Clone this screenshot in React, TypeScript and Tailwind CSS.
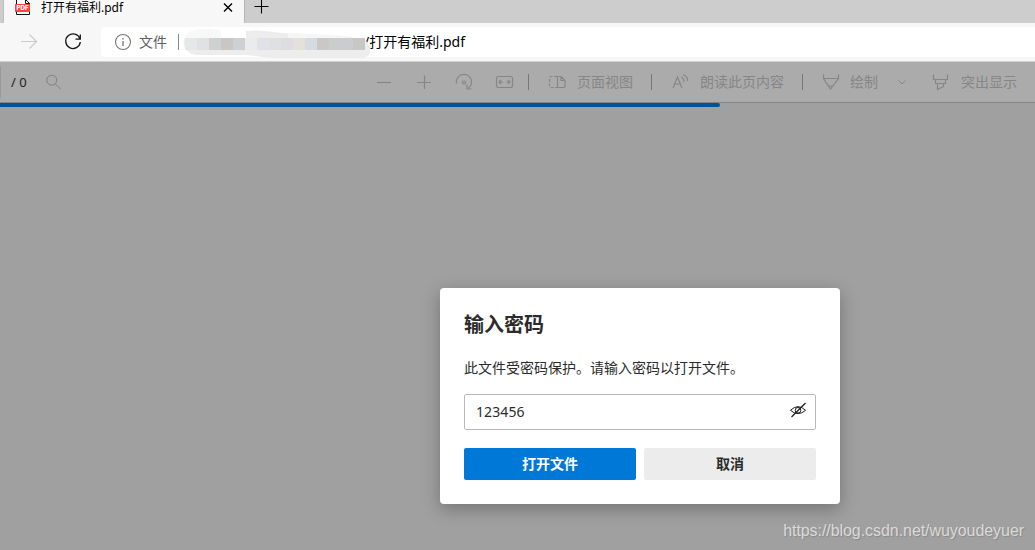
import type { ReactNode } from "react";

const mosaic = [
  "bg-[#e6e7e8]",
  "bg-[#e0e1e5]",
  "bg-[#cdd2d1]",
  "bg-[#cbc5c4]",
  "bg-[#cfd0d4]",
  "bg-[#eaebed]",
  "bg-[#dfe3e8]",
  "bg-[#e0e0e1]",
  "bg-[#dcdde1]",
  "bg-[#e4e1db]",
  "bg-[#d6dbe1]",
  "bg-[#c9c8c7]",
  "bg-[#c9cdcb]",
  "bg-[#cbcccf]",
  "bg-[#c8c7c4]",
];

type IconProps = { className?: string; children: ReactNode };

const Icon = ({ className = "", children }: IconProps) => (
  <svg
    className={`h-4 w-4 shrink-0 overflow-visible ${className}`}
    viewBox="0 0 16 16"
    fill="none"
    stroke="currentColor"
    strokeWidth="1"
  >
    {children}
  </svg>
);

const TabStrip = () => (
  <div className="flex h-[23px] bg-[#cdcdcd]">
    <div className="w-1 shrink-0 rounded-br-sm border-r border-[#bdbdbd]" />
    <div className="flex w-60 shrink-0 items-start bg-[#f7f7f7] pl-[11px]">
      <svg className="h-4 w-4 shrink-0" viewBox="0 0 16 16" fill="none">
        <path d="M1.5 0V14.5H14.5V3.5L11 0" fill="#fff" stroke="#111" />
        <path d="M10.5 0V3.5H14.5" stroke="#111" />
        <rect x="0" y="4" width="15" height="8" rx="0.5" fill="#fa4545" />
        <text x="1.5" y="10.3" fill="#fff" fontSize="6.2" fontWeight="800" fontFamily="Inter, sans-serif" textLength="12.2">
          PDF
        </text>
      </svg>
      <span className="ml-2.5 text-xs leading-[15px] text-black">打开有福利.pdf</span>
      <Icon className="mt-0 ml-auto mr-2 text-black">
        <path d="M4 3.5L12 11.5M12 3.5L4 11.5" strokeWidth="1.4" />
      </Icon>
    </div>
    <div className="w-px shrink-0 rounded-bl bg-[#b5b5b5]" />
    <Icon className="ml-2 text-black">
      <path d="M1.5 6.5H15.5M8.5 0V13.5" strokeWidth="1.1" />
    </Icon>
  </div>
);

const AddressRow = () => (
  <div className="flex h-[39px] border-b border-[#cfcfcf] bg-[#f7f7f7] pt-1">
    <Icon className="mt-[7px] ml-[21px] text-[#cbcbcb]">
      <path d="M0 7.5H15.5M8.5 0.5L15.5 7.5L8.5 14.5" strokeWidth="1.2" />
    </Icon>
    <Icon className="mt-[7px] ml-7 text-[#161616]">
      <path d="M15 5A7.3 7.3 0 1 0 15.3 8M15.3 0.5V5.2H10.5" strokeWidth="1.3" />
    </Icon>
    <div className="ml-5 flex h-[30px] flex-1 items-center rounded-l bg-white pl-3.5">
      <Icon className="text-[#767676]">
        <circle cx="8" cy="8" r="7.5" strokeWidth="1.1" />
        <path d="M8 7V12M8 4V5.5" strokeWidth="1.3" />
      </Icon>
      <span className="ml-2 w-7 text-sm text-[#606060]">文件</span>
      <div className="ml-[11px] h-4 w-px bg-[#8a8a8a]" />
      <div className="relative z-10 ml-1 h-[30px] w-[188px] shrink-0">
        <svg className="absolute inset-0" width="190" height="32" viewBox="0 0 190 32">
          <path
            d="M10 4C20 1 28 2 38 4V11H63V4C80 2 90 6 105 6L160 9L182 13C190 20 189 31 178 31H92C80 31 72 28 60 28H14C-2 27 -4 8 10 4Z"
            fill="#ededee"
          />
          <path d="M10 4C20 1 28 2 38 4V11H2C3 8 5 5 10 4Z" fill="#f7f8f8" />
          <path d="M105 6L160 9L166 11H105Z" fill="#f6f6f6" />
        </svg>
        <div className="absolute top-[11px] left-0.5 flex h-3">
          {mosaic.map((color) => (
            <div key={color} className={`w-3 ${color}`} />
          ))}
        </div>
      </div>
      <span className="-ml-[7px] text-sm text-black">/打开有福利.pdf</span>
    </div>
  </div>
);

const Divider = ({ className }: { className: string }) => (
  <div className={`h-4 w-px shrink-0 bg-[#777] ${className}`} />
);

const PdfToolbar = () => (
  <div className="flex h-[41px] items-center border-b border-[#868686] bg-[#ababab] text-sm whitespace-nowrap text-[#868686]">
    <div className="h-8 w-px shrink-0 bg-[#999]" />
    <span className="ml-2.5 w-[34px] shrink-0 text-[13px] text-[#222]">/ 0</span>
    <Icon className="ml-px text-[#808080]">
      <circle cx="5.7" cy="6.2" r="5" />
      <path d="M9.3 9.8L14.5 15" />
    </Icon>
    <Icon className="ml-[314px]">
      <path d="M1 8.5H15" strokeWidth="1.2" />
    </Icon>
    <Icon className="ml-6">
      <path d="M1 8.5H15M8.5 1.5V15" strokeWidth="1.2" />
    </Icon>
    <Icon className="ml-6">
      <path d="M0.5 9.5A7.6 7.6 0 1 1 12.5 14M11 10.5V15H15.5" strokeWidth="1.2" />
      <circle cx="8" cy="8.5" r="1.5" strokeWidth="1.2" />
    </Icon>
    <Icon className="ml-6">
      <rect x="0.5" y="2.5" width="16" height="11" rx="2" strokeWidth="1.2" />
      <path d="M3 8H7M10 8H14M5 6L3 8L5 10M12 6L14 8L12 10" strokeWidth="1.2" />
    </Icon>
    <Divider className="ml-4" />
    <Icon className="ml-5">
      <path d="M8 2.5H2A1.5 1.5 0 0 0 0.5 4V12A1.5 1.5 0 0 0 2 13.5H8" strokeWidth="1.2" strokeDasharray="3 1.5" />
      <path d="M8.5 2.5H12L16 6.5V12A1.5 1.5 0 0 1 14.5 13.5H8.5ZM12 2.5V6.5H16" strokeWidth="1.2" />
    </Icon>
    <span className="ml-3">页面视图</span>
    <Divider className="ml-[18px]" />
    <Icon className="ml-5">
      <path d="M1 14L5.5 3L10 14M2.8 10H8.2M9 3Q12 4 12 8M11 0.5Q16 2.5 15.5 7" strokeWidth="1.2" />
    </Icon>
    <span className="ml-3">朗读此页内容</span>
    <Divider className="ml-[18px]" />
    <Icon className="ml-5">
      <path d="M0.5 0.5V4.5L7.5 15L15.5 4.5V0.5M0.5 4.5H15.5M5.5 12H10" strokeWidth="1.2" />
    </Icon>
    <span className="ml-[11px]">绘制</span>
    <Icon className="ml-4">
      <path d="M4.5 6.5L8 10L11.5 6.5" />
    </Icon>
    <Icon className="ml-[23px]">
      <path d="M0.5 0.5V5.5H14.5V0.5M2.5 5.5V9.5H12.5V5.5M4.5 9.5V15.5L10.5 12.5V9.5" strokeWidth="1.2" />
    </Icon>
    <span className="ml-3">突出显示</span>
  </div>
);

const PasswordDialog = () => (
  <div className="mt-[181px] ml-[440px] h-[216px] w-[400px] rounded bg-white px-6 text-[#2b2b2b] shadow-[0_5px_18px_rgba(0,0,0,0.28)]">
    <h1 className="pt-[23px] text-xl leading-7 font-bold">输入密码</h1>
    <p className="mt-[19px] text-sm leading-5">此文件受密码保护。请输入密码以打开文件。</p>
    <div className="mt-4 flex h-9 items-center rounded-xs border border-[#bababa] pr-[9px] pl-[11px]">
      <span className="flex-1 text-sm tracking-[0.1px]">123456</span>
      <Icon className="-mt-1 text-[#1c1c1c]">
        <path d="M0.5 8.3Q8 1 15.5 8.3Q8 15 0.5 8.3Z" />
        <circle cx="8" cy="8.3" r="2.8" />
        <path d="M1.5 15L15.5 1" strokeWidth="1.3" />
      </Icon>
    </div>
    <div className="mt-[18px] flex gap-2 text-sm font-bold">
      <button className="h-8 flex-1 rounded-xs bg-[#0078d7] text-white">打开文件</button>
      <button className="h-8 flex-1 rounded-xs bg-[#ececec]">取消</button>
    </div>
  </div>
);

export default function App() {
  return (
    <div className="relative h-[550px] w-[1035px] overflow-hidden bg-[#a0a0a0] font-['Noto_Sans','Noto_Sans_CJK_SC',sans-serif]">
      <TabStrip />
      <AddressRow />
      <PdfToolbar />
      <div className="h-1 w-[720px] rounded-r-sm bg-[#005493]" />
      <PasswordDialog />
      <span className="absolute right-[11px] bottom-[9px] font-['Liberation_Sans',sans-serif] text-base leading-5 tracking-[-0.06px] text-[#dadada] [text-shadow:1px_1px_1px_#888]">
        https://blog.csdn.net/wuyoudeyuer
      </span>
    </div>
  );
}
